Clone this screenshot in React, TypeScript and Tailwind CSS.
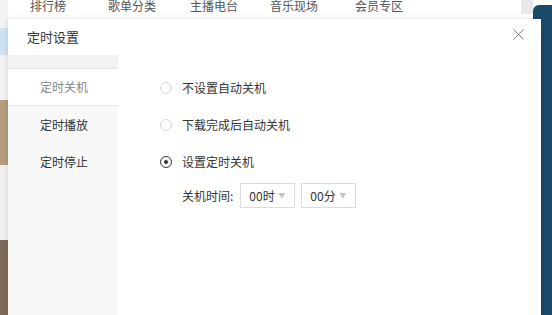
import { X } from 'lucide-react'

const nav = ['排行榜', '歌单分类', '主播电台', '音乐现场', '会员专区']
const tabs = ['定时关机', '定时播放', '定时停止']
const opts = ['不设置自动关机', '下载完成后自动关机', '设置定时关机']

function Radio({ on }: { on?: boolean }) {
  return (
    <span className={'flex h-[12px] w-[12px] items-center justify-center rounded-full border ' + (on ? 'border-[#333]' : 'border-[#d4d4d4]')}>
      {on && <span className="h-[4px] w-[4px] rounded-full bg-[#333]" />}
    </span>
  )
}

function Select({ value }: { value: string }) {
  return (
    <div className="flex h-[25px] w-[55px] items-center justify-between border border-[#dcdcdc] bg-white pl-[8px] pr-[9px] text-[12px] text-[#333]">
      <span>{value}</span>
      <span className="text-[7px] text-[#c4c4c4]">▼</span>
    </div>
  )
}

export default function App() {
  return (
    <div className="relative h-[315px] w-[552px] overflow-hidden bg-white" style={{ fontFamily: '"Noto Sans CJK SC", "Microsoft YaHei", sans-serif' }}>
      {/* background page */}
      <div className="flex h-[18px] items-end pl-[30px] text-[12px] leading-[14px] text-[#555]">
        {nav.map((n, i) => (
          <span key={n} className={['w-[78px]', 'w-[82px]', 'w-[80px]', 'w-[85px]', 'w-[80px]'][i] + ' -translate-y-[5px]'}>{n}</span>
        ))}
      </div>
      <div className="absolute left-0 top-0 flex h-full w-[8px] flex-col">
        <div className="h-[28px] bg-[#f3f3f3]" />
        <div className="h-[27px] bg-[#cfe2f3]" />
        <div className="h-[45px] bg-[#f2f2f2]" />
        <div className="h-[65px] bg-[#b59c7c]" />
        <div className="h-[75px] bg-[#f1f1f1]" />
        <div className="flex-1 bg-[#7b6a58]" />
      </div>
      <div className="absolute right-0 top-[5px] h-full w-[19px] rounded-tl-[6px] bg-[#1b4a69]" />
      <div className="absolute right-[19px] top-0 h-[14px] w-[12px] bg-[#e9e9e9]" />

      {/* dialog */}
      <div className="absolute left-[8px] top-[19px] flex h-[310px] w-[533px] flex-col bg-white shadow-[0_0_6px_rgba(0,0,0,0.12)]">
        <div className="flex h-[36px] items-center justify-between pl-[19px] pr-[13px]">
          <span className="-mt-[1px] text-[13px] text-[#333]">定时设置</span>
          <X size={19} strokeWidth={1.1} className="-mt-[6px] text-[#666]" />
        </div>
        <div className="flex flex-1">
          <div className="flex w-[110px] flex-col bg-[#f8f8f8]">
            <div className="h-[14px] border-b border-[#e6e6e6] bg-[#f3f3f3]" />
            {tabs.map((t, i) => (
              <div
                key={t}
                className={'flex h-[37px] items-center pl-[32px] text-[12px] ' + (i === 0 ? 'border-b border-[#e6e6e6] bg-white text-[#888]' : 'text-[#333]')}
              >
                {t}
              </div>
            ))}
          </div>
          <div className="flex flex-col pl-[42px] pt-[14px]">
            {opts.map((o, i) => (
              <div key={o} className="flex h-[37px] items-center gap-[10px] text-[12px] text-[#333]">
                <Radio on={i === 2} />
                <span>{o}</span>
              </div>
            ))}
            <div className="ml-[22px] mt-[3px] flex items-center gap-[6px] text-[12px] text-[#333]">
              <span className="mr-[1px]">关机时间:</span>
              <Select value="00时" />
              <Select value="00分" />
            </div>
          </div>
        </div>
      </div>
    </div>
  )
}
